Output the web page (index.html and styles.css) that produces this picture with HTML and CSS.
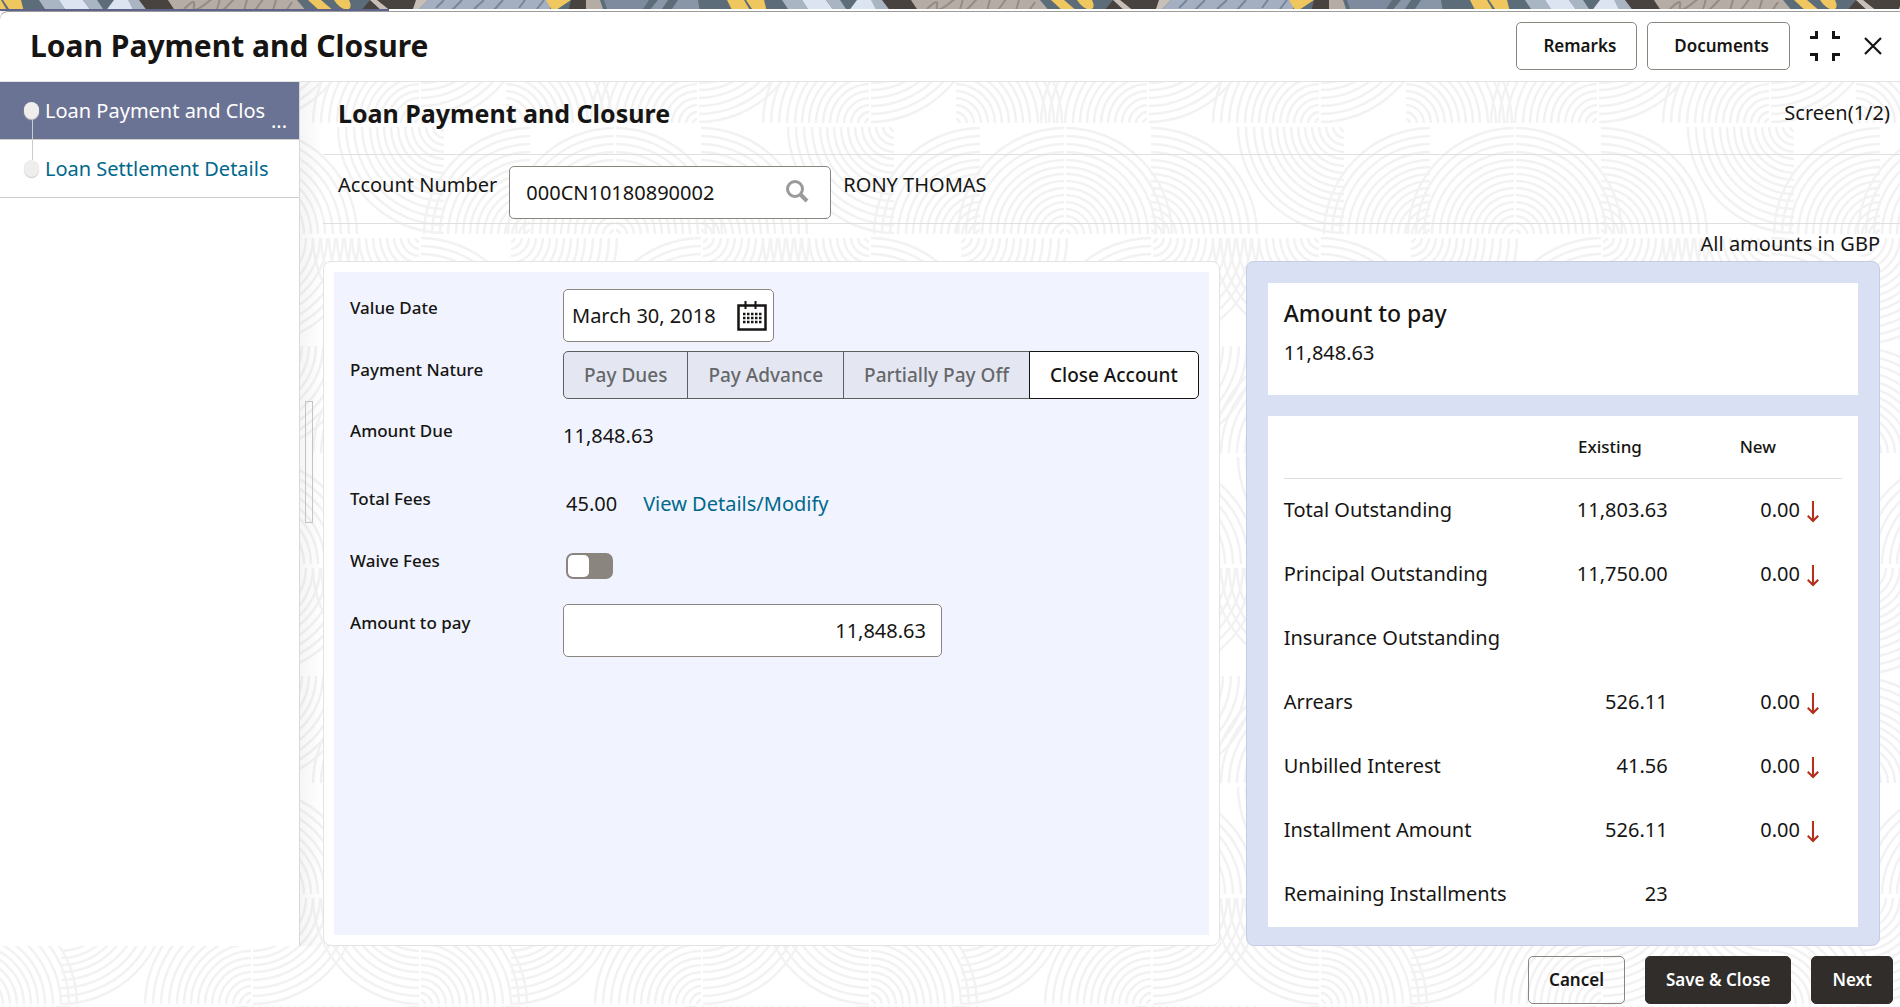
FILE: index.html
```html
<!DOCTYPE html>
<html lang="en">

<head>
    <meta charset="UTF-8">
    <meta name="viewport" content="width=device-width, initial-scale=1.0">
    <title>Loan Payment and Closure</title>
    <link rel="stylesheet" href="styles.css">
</head>

<body>
    <svg class="patternStrip" aria-hidden="true">
        <defs>
            <pattern id="banner" x="-16" width="743" height="12" patternUnits="userSpaceOnUse">
                <rect width="743" height="12" fill="#5c6c78" />
                <path d="M0 0h17l7 12H6zM19 0h18l3 12H27z" fill="#efc75e" />
                <path d="M55 0h20l8 12H63z" fill="#aab5c4" />
                <path d="M75 0h24l9 12H83z" fill="#dce4f2" />
                <path d="M99 0h14l8 12h-13z" fill="#aab5c4" />
                <path d="M130 0l-9 12h27l8-12z" fill="#dce4f2" />
                <path d="M144 0h12l9 12h-15z" fill="#aab5c4" />
                <path d="M155 0h29l8 12h-28z" fill="#48433f" />
                <path d="M184 0h129l10 12H192z" fill="#b5ada5" />
                <path d="M200 9q12-12 10-3t14-4 10 4 15-6 12 7 16-5 13 5 18-5" fill="none" stroke="#928b86" stroke-width="2" />
                <path d="M324 0h13l14 12h-14zM350 0h15q4 8-2 10-8-2-13-10z" fill="#efc75e" />
                <path d="M386 0h50l-10 12h-50z" fill="#48433f" />
                <path d="M386 0h7l15 12h-9zM432 0h12l-12 12h-4z" fill="#c8c0b8" />
                <path d="M444 0h122v12H432z" fill="#a4b0c2" />
                <path d="M452 8l8-8m8 10l10-10m12 9l10-9m10 10l9-10m16 8l6-8m12 9l7-9" stroke="#77859a" stroke-width="2" />
                <path d="M562 0h25l-18 12z" fill="#efc75e" />
                <path d="M587 0h15v12h-18z" fill="#48433f" />
                <path d="M602 0h14l4 12h-18z" fill="#b5ada5" />
                <path d="M620 0h45l-8 12h-33z" fill="#7e8b9f" />
                <path d="M674 0h10l-8 12h-12zM694 0h20l2 12h-30z" fill="#8996a8" />
            </pattern>
        </defs>
        <rect width="100%" height="100%" fill="url(#banner)" />
    </svg>
    <div class="progress"></div>

    <header class="titleBar">
        <h1>Loan Payment and Closure</h1>
        <button class="btn btnHeader">Remarks</button>
        <button class="btn btnHeader">Documents</button>
        <button class="iconBtn" aria-label="Collapse">
            <svg width="30" height="30" viewBox="0 0 30 30" fill="none" stroke="#161513" stroke-width="3">
                <path d="M0 6.500h6.500V0M23.500 0v6.500H30M0 23.500h6.500V30M30 23.500h-6.500V30" />
            </svg>
        </button>
        <button class="iconBtn" aria-label="Close">
            <svg width="18" height="18" viewBox="0 0 18 18" fill="none" stroke="#161513" stroke-width="2.200">
                <path d="M1 1l16 16M17 1L1 17" />
            </svg>
        </button>
    </header>

    <div class="workArea">
        <nav class="steps">
            <a href="#" class="step active"><span class="dot"></span><span class="stepName">Loan Payment and Clos</span><span class="more">...</span></a>
            <a href="#" class="step"><span class="dot"></span><span class="stepName">Loan Settlement Details</span></a>
        </nav>
        <div class="splitter"><span class="grip"></span></div>

        <main class="content">
            <div class="screenHead">
                <h2>Loan Payment and Closure</h2>
                <span>Screen(1/2)</span>
            </div>
            <div class="accountRow">
                <label for="account">Account Number</label>
                <div class="field accountField">
                    <input type="text" id="account" value="000CN10180890002">
                    <svg width="24" height="28" viewBox="0 0 24 28" fill="none" stroke="#9a9a9a">
                        <circle cx="10" cy="10" r="7.500" stroke-width="3" />
                        <path d="M15.500 15.500l6.500 6.500" stroke-width="4" />
                    </svg>
                </div>
                <span>RONY THOMAS</span>
            </div>
            <p class="currency">All amounts in GBP</p>

            <div class="panels">
                <section class="formPanel">
                    <div class="form">
                        <label for="valueDate">Value Date</label>
                        <div class="control">
                            <div class="field dateField">
                                <input type="text" id="valueDate" value="March 30, 2018">
                                <svg width="30" height="30" viewBox="0 0 30 30" fill="none" stroke="#161513">
                                    <path d="M1.500 4.500h27v24h-27z" stroke-width="2.500" />
                                    <path d="M8.500 0v8M18.500 0v8" stroke-width="2" />
                                    <path d="M6 13h19M6 17h19M6 21h19" stroke-width="2.500" stroke-dasharray="2.500 1.500" />
                                </svg>
                            </div>
                        </div>

                        <span class="label">Payment Nature</span>
                        <div class="control">
                            <div class="segments">
                                <button>Pay Dues</button>
                                <button>Pay Advance</button>
                                <button>Partially Pay Off</button>
                                <button class="selected">Close Account</button>
                            </div>
                        </div>

                        <span class="label">Amount Due</span>
                        <div class="control"><span>11,848.63</span></div>

                        <span class="label">Total Fees</span>
                        <div class="control fees">
                            <span>45.00</span>
                            <a href="#">View Details/Modify</a>
                        </div>

                        <label for="waive">Waive Fees</label>
                        <div class="control fees"><input type="checkbox" class="toggle" id="waive"></div>

                        <label for="amount">Amount to pay</label>
                        <div class="control">
                            <div class="field amountField"><input type="text" id="amount" value="11,848.63"></div>
                        </div>
                    </div>
                </section>

                <section class="summaryPanel">
                    <div class="card">
                        <h3>Amount to pay</h3>
                        <p>11,848.63</p>
                    </div>
                    <div class="card tableCard">
                        <table>
                            <thead>
                                <tr><th class="nameCol"></th><th class="existingCol">Existing</th><th class="newCol">New</th></tr>
                            </thead>
                            <tbody>
                                <tr><td>Total Outstanding</td><td>11,803.63</td><td>0.00<svg class="down" viewBox="0 0 12 21"><path d="M6 0v19M1 14l5 5 5-5" /></svg></td></tr>
                                <tr><td>Principal Outstanding</td><td>11,750.00</td><td>0.00<svg class="down" viewBox="0 0 12 21"><path d="M6 0v19M1 14l5 5 5-5" /></svg></td></tr>
                                <tr><td>Insurance Outstanding</td><td></td><td></td></tr>
                                <tr><td>Arrears</td><td>526.11</td><td>0.00<svg class="down" viewBox="0 0 12 21"><path d="M6 0v19M1 14l5 5 5-5" /></svg></td></tr>
                                <tr><td>Unbilled Interest</td><td>41.56</td><td>0.00<svg class="down" viewBox="0 0 12 21"><path d="M6 0v19M1 14l5 5 5-5" /></svg></td></tr>
                                <tr><td>Installment Amount</td><td>526.11</td><td>0.00<svg class="down" viewBox="0 0 12 21"><path d="M6 0v19M1 14l5 5 5-5" /></svg></td></tr>
                                <tr><td>Remaining Installments</td><td>23</td><td></td></tr>
                            </tbody>
                        </table>
                    </div>
                </section>
            </div>
        </main>
    </div>

    <footer class="actions">
        <button class="btn">Cancel</button>
        <button class="btn dark">Save &amp; Close</button>
        <button class="btn dark">Next</button>
    </footer>
</body>

</html>
```
FILE: styles.css
```css
* {
    box-sizing: border-box;
}

body {
    margin: 0;
    min-height: 100vh;
    display: flex;
    flex-direction: column;
    font-family: "Noto Sans", "Open Sans", sans-serif;
    font-size: 20px;
    line-height: 28px;
    color: #161513;
    background-color: white;
    /* quarter circles of concentric arcs, 450 x 330 tile */
    background-image: url("data:image/svg+xml,%3Csvg xmlns='http://www.w3.org/2000/svg' xmlns:xlink='http://www.w3.org/1999/xlink' width='450' height='330'%3E%3Cdefs%3E%3CclipPath id='c'%3E%3Cpath d='M1 -1h110v-110H1z'/%3E%3C/clipPath%3E%3Cg id='q' clip-path='url(%23c)' fill='none' stroke='%23f2f2f2' stroke-width='2.500'%3E%3Ccircle r='5'/%3E%3Ccircle r='12'/%3E%3Ccircle r='19'/%3E%3Ccircle r='26'/%3E%3Ccircle r='33'/%3E%3Ccircle r='40'/%3E%3Ccircle r='47'/%3E%3Ccircle r='54'/%3E%3Ccircle r='61'/%3E%3Ccircle r='68'/%3E%3Ccircle r='75'/%3E%3Ccircle r='83'/%3E%3Ccircle r='91'/%3E%3Ccircle r='99'/%3E%3Ccircle r='107'/%3E%3C/g%3E%3Cg id='l'%3E%3Cuse xlink:href='%23q' transform='scale(-1 1)'/%3E%3C/g%3E%3Cg id='dl'%3E%3Cuse xlink:href='%23q' transform='scale(-1 -1)'/%3E%3C/g%3E%3Cg id='dr'%3E%3Cuse xlink:href='%23q' transform='scale(1 -1)'/%3E%3C/g%3E%3C/defs%3E%3Cuse xlink:href='%23l' x='26' y='110'/%3E%3Cuse xlink:href='%23l' x='476' y='110'/%3E%3Cuse xlink:href='%23l' x='110' y='110'/%3E%3Cuse xlink:href='%23q' x='110' y='110'/%3E%3Cuse xlink:href='%23q' x='195' y='110'/%3E%3Cuse xlink:href='%23dl' x='390' y='1'/%3E%3Cuse xlink:href='%23dr' x='5' y='112'/%3E%3Cuse xlink:href='%23dr' x='197' y='112'/%3E%3Cuse xlink:href='%23dl' x='365' y='112'/%3E%3Cuse xlink:href='%23l' x='197' y='220'/%3E%3Cuse xlink:href='%23q' x='365' y='220'/%3E%3Cuse xlink:href='%23q' x='-85' y='220'/%3E%3Cuse xlink:href='%23q' x='0' y='329'/%3E%3Cuse xlink:href='%23l' x='193' y='329'/%3E%3Cuse xlink:href='%23l' x='365' y='329'/%3E%3Cuse xlink:href='%23dr' x='193' y='220'/%3E%3Cuse xlink:href='%23dr' x='365' y='220'/%3E%3Cuse xlink:href='%23dr' x='-85' y='220'/%3E%3C/svg%3E");
    background-position: 955px 125px;
}

h1,
h2,
h3,
p {
    margin: 0;
}

button,
input {
    font: inherit;
    color: inherit;
}

button {
    cursor: pointer;
}

a {
    color: #00688c;
    text-decoration: none;
}

.patternStrip {
    display: block;
    width: 100%;
    height: 9px;
}

.progress {
    height: 2px;
    background: linear-gradient(90deg, #5f6389 389px, white 389px);
}

.titleBar {
    height: 71px;
    display: flex;
    align-items: center;
    padding: 0 18px 2px 30px;
    background-color: white;
    border-top: 1px solid #9b9b9b;
    border-bottom: 1px solid #e3e3e3;
    border-top-left-radius: 8px;
}

.titleBar h1 {
    flex: 1;
    font-size: 30px;
    line-height: 40px;
}

.btn {
    height: 48px;
    padding: 0 20px;
    border: 1px solid #8b8580;
    border-radius: 5px;
    background-color: transparent;
    font-size: 17px;
    font-weight: 600;
}

.btnHeader {
    margin-right: 10px;
    padding: 0 20px 0 26px;
    background-color: white;
}

.iconBtn {
    display: flex;
    margin-left: 10px;
    padding: 0;
    border: none;
    background: none;
}

.iconBtn + .iconBtn {
    margin-left: 24px;
}

.workArea {
    flex: 1;
    display: flex;
}

.steps {
    width: 300px;
    flex-shrink: 0;
    background-color: white;
    border-right: 1px solid #d3dae0;
}

.step {
    position: relative;
    height: 58px;
    display: flex;
    align-items: center;
    gap: 6px;
    padding-left: 24px;
    border-bottom: 1px solid #cfcfca;
}

.step.active {
    background-color: #6b7394;
    color: white;
}

.dot {
    width: 15px;
    height: 17px;
    border-radius: 8px;
    background-color: #efeeec;
    box-shadow: 0 1px 1px #c9c9c9;
}

/* line joining the two step dots */
.step::after {
    content: "";
    position: absolute;
    left: 32px;
    top: 0;
    width: 1px;
    height: 20px;
    background-color: #cccccc;
}

.step.active::after {
    top: 37px;
}

.more {
    position: absolute;
    right: 12px;
    bottom: 4px;
}

.splitter {
    width: 23px;
    flex-shrink: 0;
    display: flex;
    padding: 319px 0 0 5px;
    background: linear-gradient(90deg, rgba(0, 0, 0, 0.04), transparent);
}

.grip {
    width: 8px;
    height: 122px;
    border: 1px solid #c4c4c4;
}

.content {
    flex: 1;
    display: flex;
    flex-direction: column;
}

.screenHead {
    height: 73px;
    display: flex;
    justify-content: space-between;
    padding: 17px 10px 0 15px;
    border-bottom: 1px solid #dfdfdf;
}

.screenHead h2 {
    font-size: 25px;
}

.accountRow {
    height: 69px;
    display: flex;
    gap: 12px;
    padding: 11px 15px;
    border-bottom: 1px solid #dfdfdf;
    line-height: 38px;
}

.field {
    height: 53px;
    display: flex;
    align-items: center;
    background-color: white;
    border: 1px solid #8b8580;
    border-radius: 5px;
}

.field input {
    flex: 1;
    min-width: 0;
    height: 100%;
    padding: 0;
    border: none;
    outline: none;
    background: none;
}

.accountField {
    width: 322px;
    padding: 0 21px 0 16px;
}

.currency {
    padding: 6px 20px 3px;
    text-align: right;
}

.panels {
    flex: 1;
    display: flex;
    gap: 26px;
    padding-right: 20px;
}

.formPanel {
    flex: 894;
    display: flex;
    padding: 10px;
    background-color: white;
    border: 1px solid #e3e3e3;
    border-radius: 8px;
}

.form {
    flex: 1;
    display: grid;
    grid-template-columns: 213px 1fr;
    grid-template-rows: 62px 61px 68px 62px 62px;
    align-items: start;
    padding: 17px 10px 0 16px;
    background-color: #f1f4fe;
}

.form label,
.label {
    padding-top: 7px;
    font-size: 17px;
    font-weight: 500;
    line-height: 24px;
}

.control {
    min-height: 48px;
    display: flex;
    align-items: center;
}

.fees {
    gap: 26px;
    padding-left: 3px;
}

.dateField {
    width: 211px;
    padding: 0 6px 0 8px;
}

.amountField {
    width: 379px;
    padding: 0 15px;
}

.amountField input {
    text-align: right;
}

.segments {
    display: flex;
}

.segments button {
    height: 48px;
    margin-right: -1px;
    padding: 0 20px;
    border: 1px solid #5f5f5f;
    background-color: #e4e7f1;
    color: #66676b;
    font-size: 19px;
    font-weight: 500;
    white-space: nowrap;
}

.segments button:first-child {
    border-radius: 5px 0 0 5px;
}

.segments .selected {
    margin-right: 0;
    border-color: #161513;
    border-radius: 0 5px 5px 0;
    background-color: white;
    color: #161513;
}

.toggle {
    appearance: none;
    display: flex;
    width: 47px;
    height: 26px;
    margin: 0;
    padding: 2px;
    border-radius: 7px;
    background-color: #8b8580;
}

.toggle::before {
    content: "";
    width: 21px;
    height: 22px;
    border-radius: 5px;
    background-color: white;
}

.summaryPanel {
    flex: 637;
    display: flex;
    flex-direction: column;
    gap: 21px;
    padding: 21px 21px 18px;
    background-color: #dae0f3;
    border: 1px solid #c5cce4;
    border-radius: 8px;
}

.card {
    min-height: 112px;
    padding: 14px 16px 0;
    background-color: white;
}

.card h3 {
    font-size: 23px;
    font-weight: 500;
    line-height: 32px;
}

.card p {
    padding-top: 10px;
}

.tableCard {
    flex: 1;
    padding-top: 0;
}

table {
    width: 100%;
    table-layout: fixed;
    border-collapse: collapse;
}

th {
    height: 62px;
    padding: 0;
    border-bottom: 1px solid #dfdfdf;
    font-size: 17px;
    font-weight: 500;
    text-align: left;
}

.nameCol {
    width: 52%;
}

.existingCol {
    width: 20%;
    padding-left: 4px;
}

.newCol {
    padding-left: 54px;
}

td {
    height: 64px;
    padding: 0;
    white-space: nowrap;
}

td:nth-child(2) {
    padding-right: 18px;
    text-align: right;
}

td:nth-child(3) {
    padding-right: 22px;
    text-align: right;
}

.down {
    width: 14px;
    height: 22px;
    margin-left: 6px;
    vertical-align: text-bottom;
    fill: none;
    stroke: #b3311f;
    stroke-width: 2;
}

.actions {
    display: flex;
    justify-content: flex-end;
    gap: 20px;
    padding: 10px 7px 3px;
}

.dark {
    border-color: #312d2a;
    background-color: #312d2a;
    color: white;
}
```
